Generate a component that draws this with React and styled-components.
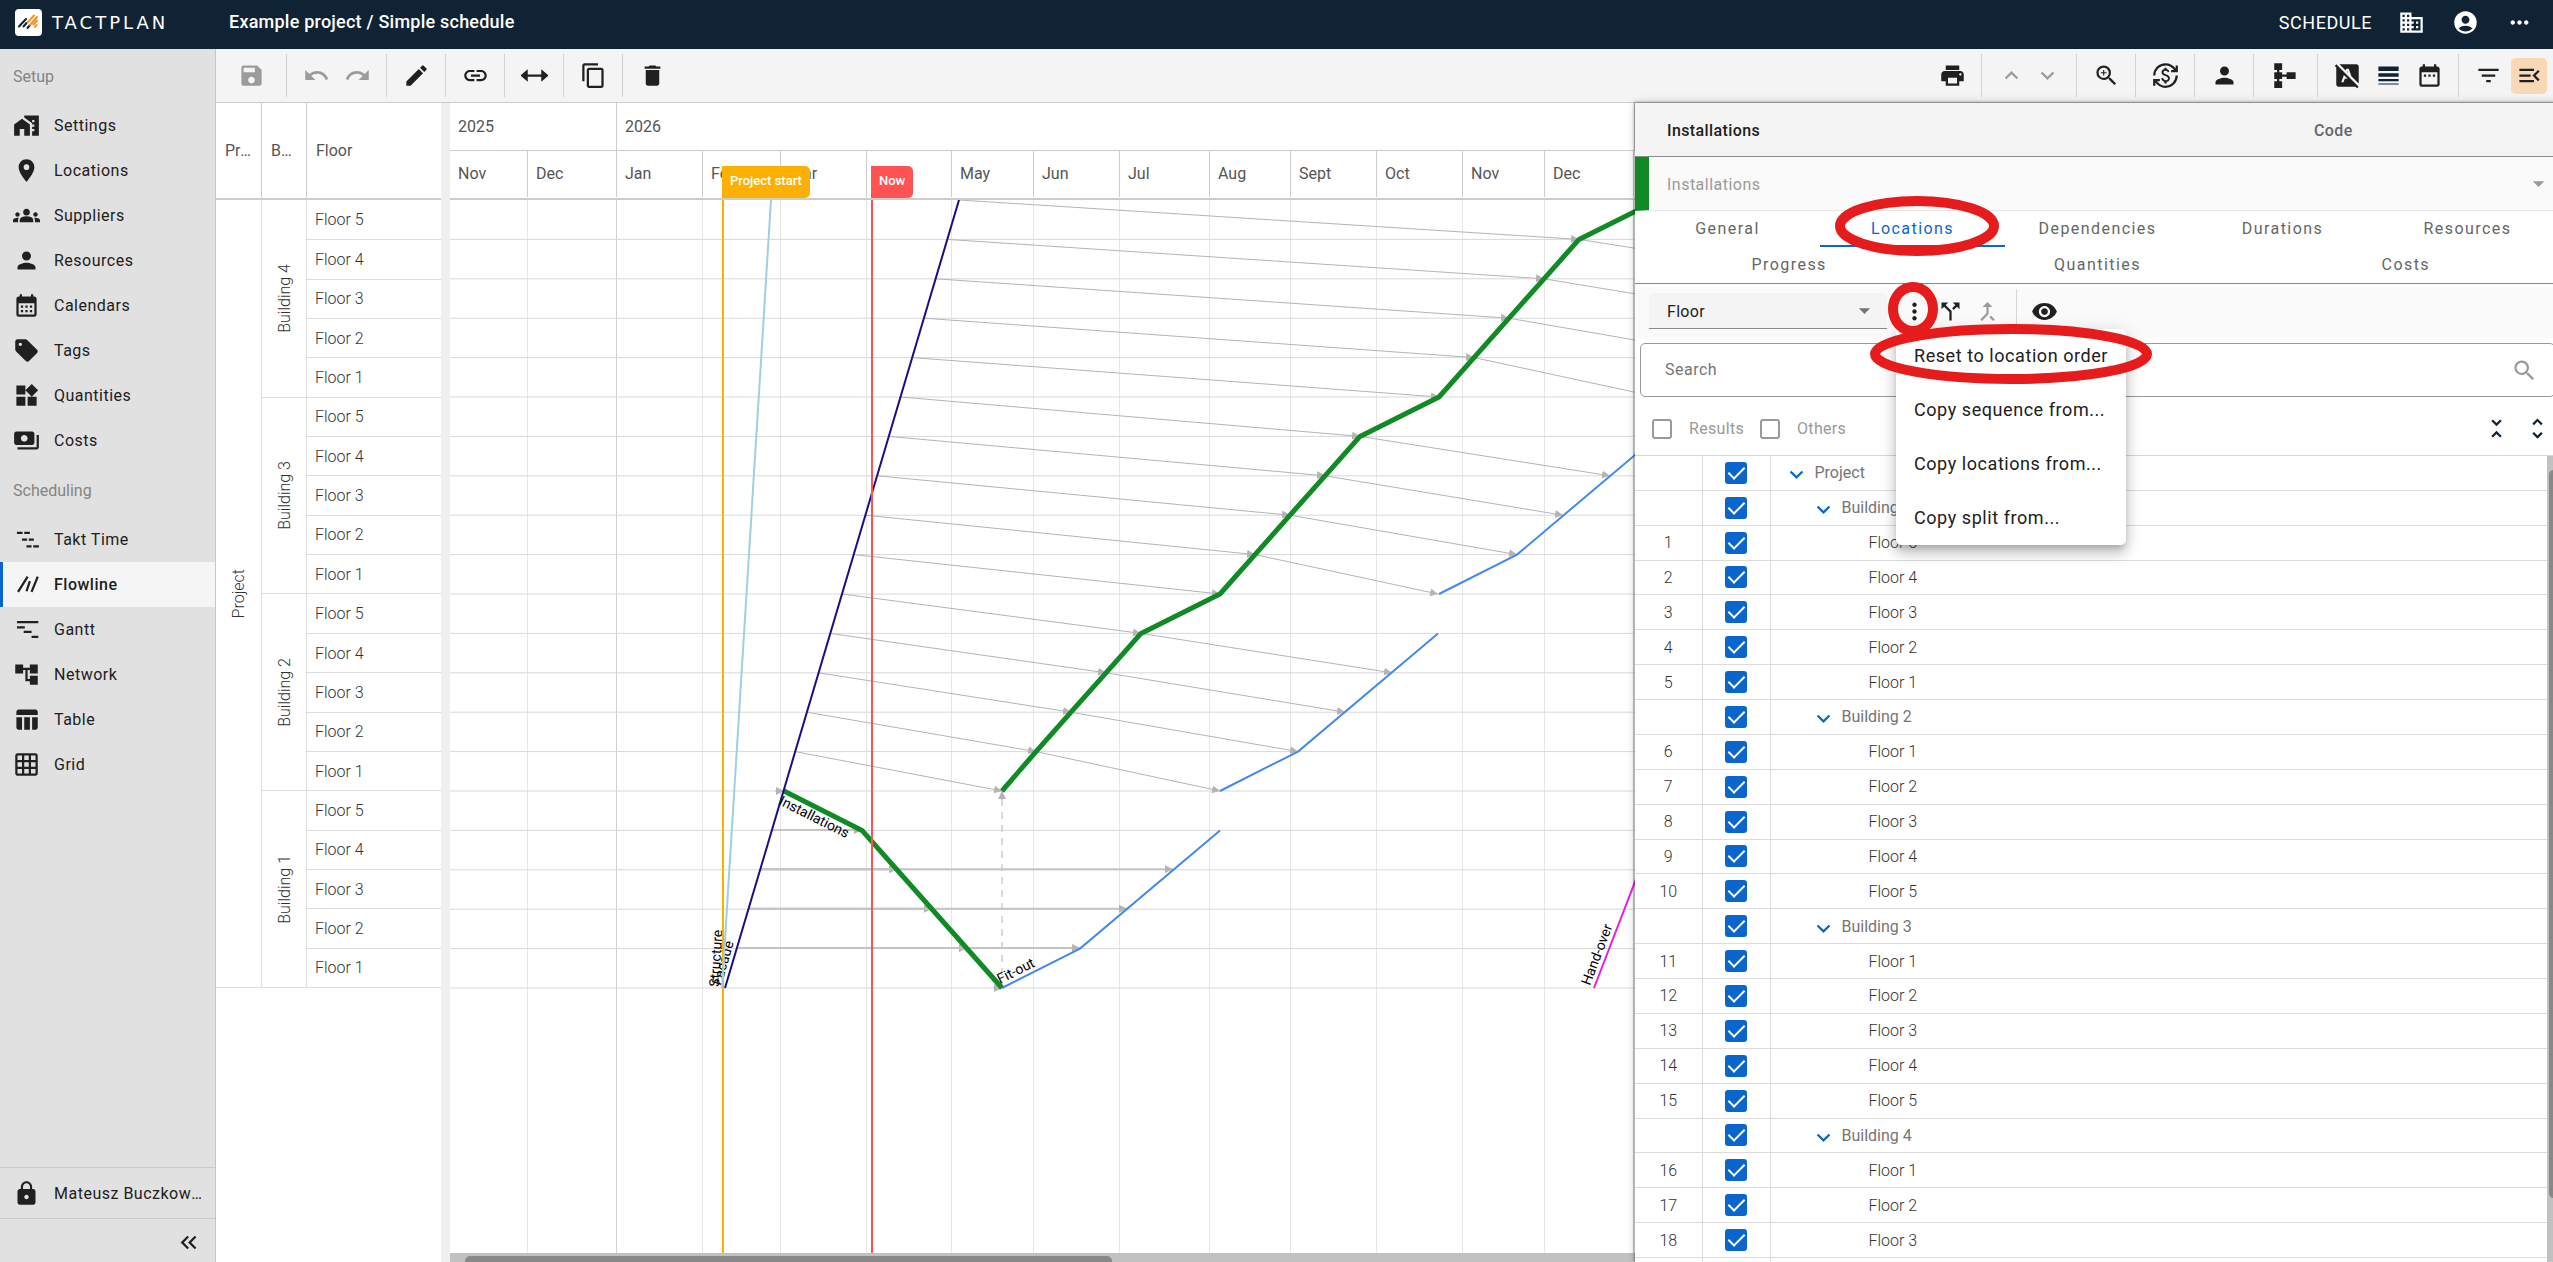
import React from 'react'
import styled, { createGlobalStyle, css } from 'styled-components';
import {
    MdHomeWork, MdPlace, MdGroups, MdPerson, MdCalendarMonth, MdSell, MdWidgets, MdPayments,
    MdAccountTree, MdTableChart, MdGridOn, MdLock, MdKeyboardDoubleArrowLeft, MdSave, MdUndo,
    MdRedo, MdEdit, MdLink, MdContentCopy, MdDelete, MdPrint, MdExpandLess, MdExpandMore,
    MdZoomIn, MdCurrencyExchange, MdFontDownloadOff, MdLineWeight, MdDateRange, MdFilterList,
    MdMenuOpen, MdBusiness, MdAccountCircle, MdMoreHoriz, MdMoreVert, MdCallSplit, MdCallMerge,
    MdVisibility, MdArrowDropDown, MdUnfoldLess, MdUnfoldMore, MdSearch,
} from 'react-icons/md';

const GlobalStyle = createGlobalStyle`
    * {
        box-sizing: border-box;
    }
    body {
        margin: 0;
        overflow: hidden;
        font-family: Roboto, "Liberation Sans", sans-serif;
        font-size: 16px;
        color: #202020;
    }
    button, input, select {
        font: inherit;
        color: inherit;
    }
`;

const Page = styled.div`
    display: flex;
    flex-direction: column;
    height: 100vh;
    overflow: hidden;
    background: #fff;
`;

/* ---------- top bar ---------- */

const TopBar = styled.header`
    display: flex;
    align-items: center;
    flex: none;
    height: 49px;
    padding: 0 16px 5px 15px;
    background: #0f2334;
    color: #fff;
`;

const Brand = styled.a`
    display: flex;
    align-items: center;
    gap: 10px;
    width: 214px;
    color: inherit;
    text-decoration: none;
`;

const Wordmark = styled.span`
    font-family: "DejaVu Sans", sans-serif;
    font-size: 18px;
    letter-spacing: 3px;
`;

const Title = styled.h1`
    flex: 1;
    margin: 0;
    padding-bottom: 1px;
    font-size: 18px;
    font-weight: 500;
    letter-spacing: 0.0125em;
`;

const TopActions = styled.nav`
    display: flex;
    align-items: center;
    gap: 18px;
`;

const TopButton = styled.button`
    display: flex;
    align-items: center;
    justify-content: center;
    min-width: 36px;
    height: 36px;
    padding: 0;
    border: 0;
    background: none;
    font-size: ${props => (props.$text ? '18px' : '27px')};
    letter-spacing: ${props => (props.$text ? '0.03em' : 'normal')};
    margin-right: ${props => (props.$text ? '3px' : '0')};
    white-space: nowrap;
`;

/* ---------- sidebar ---------- */

const Body = styled.div`
    display: flex;
    flex: 1;
    min-height: 0;
`;

const Sidebar = styled.aside`
    display: flex;
    flex-direction: column;
    flex: none;
    width: 216px;
    background: #e1e1e1;
    border-right: 1px solid #c6c6c6;
`;

const SectionTitle = styled.h2`
    display: flex;
    align-items: center;
    height: 54px;
    margin: 0;
    padding-left: 13px;
    font-size: 16px;
    font-weight: 400;
    color: #848484;
`;

const NavLink = styled.a`
    display: flex;
    align-items: center;
    gap: 14px;
    height: ${props => (props.$tall ? '50px' : '45px')};
    padding: 0 12px 0 13px;
    color: #202020;
    text-decoration: none;
    letter-spacing: 0.03125em;
    ${props => props.$active && css`
        background: #f5f5f5;
        box-shadow: inset 3px 0 0 #0a66cc;
        font-weight: 500;
    `}

    svg {
        flex: none;
        width: 27px;
        height: 27px;
    }

    span {
        overflow: hidden;
        text-overflow: ellipsis;
        white-space: nowrap;
    }
`;

const SidebarFooter = styled.div`
    margin-top: auto;
    border-top: 1px solid #cbcbcb;
`;

const Collapse = styled.button`
    display: flex;
    align-items: center;
    justify-content: flex-end;
    width: 100%;
    height: 44px;
    padding: 4px 13px 0 0;
    border: 0;
    border-top: 1px solid #cbcbcb;
    background: none;
    font-size: 27px;
`;

/* ---------- toolbar ---------- */

const Main = styled.main`
    display: flex;
    flex-direction: column;
    flex: 1;
    min-width: 0;
`;

const Toolbar = styled.div`
    display: flex;
    flex: none;
    height: 54px;
    padding: 5px 6px 5px 0;
    background: #f4f4f4;
    border-bottom: 1px solid #ccc;
`;

const Group = styled.div`
    display: flex;
    align-items: center;
    gap: ${props => (props.$tight ? '0' : '5px')};
    padding: 0 11px;
    border-left: 1px solid ${props => (props.$plain ? 'transparent' : '#d2d2d2')};

    &:first-child {
        padding: 0 17px;
        border-left: 0;
    }
    &:last-child {
        padding-right: 0;
    }
`;

const Spacer = styled.div`
    flex: 1;
`;

const ToolButton = styled.button`
    display: flex;
    align-items: center;
    justify-content: center;
    width: ${props => props.$width || 36}px;
    height: 36px;
    padding: 0;
    border: 0;
    border-radius: 5px;
    background: ${props => (props.$active ? '#f8d8b5' : 'none')};
    color: ${props => props.$color || '#202020'};
    font-size: 27px;

    &:disabled {
        color: #9b9b9b;
    }
    svg {
        width: 27px;
        height: 27px;
    }
`;

/* ---------- flowline view ---------- */

const Workspace = styled.div`
    display: flex;
    flex: 1;
    min-height: 0;
`;

const LocationGrid = styled.section`
    flex: none;
    width: 225px;
    color: #555;
`;

const LocationHead = styled.div`
    display: grid;
    grid-template-columns: 46px 45px 1fr;
    height: 97px;
    border-bottom: 2px solid #ccc;
`;

const HeadCell = styled.div`
    overflow: hidden;
    padding: 0 8px 0 9px;
    border-right: 1px solid #ccc;
    line-height: 95px;
    text-overflow: ellipsis;
    white-space: nowrap;

    &:last-child {
        border-right: 0;
    }
`;

const LocationBody = styled.div`
    display: grid;
    grid-template-columns: 46px 45px 1fr;
    grid-template-rows: repeat(20, 1fr);
    height: 788px;
    border-bottom: 1px solid #ddd;
    font-weight: 300;
    color: #333;
`;

const SpanCell = styled.div`
    display: flex;
    align-items: center;
    justify-content: center;
    grid-column: ${props => props.$col};
    grid-row: ${props => props.$start} / span ${props => props.$span};
    border-right: 1px solid #ddd;
    border-top: ${props => (props.$start > 1 ? '1px solid #ddd' : '0')};

    span {
        writing-mode: vertical-rl;
        transform: rotate(180deg);
    }
`;

const FloorCell = styled.div`
    display: flex;
    align-items: center;
    grid-column: 3;
    padding-left: 8px;
    border-top: ${props => (props.$first ? '0' : '1px solid #ddd')};
`;

const Splitter = styled.div`
    flex: none;
    width: 9px;
    background: #efefef;
`;

const ChartPane = styled.section`
    position: relative;
    display: flex;
    flex-direction: column;
    flex: 1;
    min-width: 0;
    overflow: hidden;
`;

const TimeHead = styled.div`
    flex: none;
    height: 97px;
    border-bottom: 2px solid #ccc;
    color: #555;
`;

const TimeRow = styled.div`
    display: grid;
    grid-template-columns: ${props => props.$columns};
    height: 47px;
`;

const TimeCell = styled.div`
    padding-left: 8px;
    border-right: 1px solid #ccc;
    border-bottom: ${props => (props.$year ? '1px solid #ccc' : '0')};
    line-height: 47px;
`;

const Flag = styled.div`
    position: absolute;
    top: 63px;
    left: ${props => props.$left}px;
    height: 32px;
    padding: 0 8px;
    border-radius: 0 5px 5px 0;
    background: ${props => props.$color};
    color: #fff;
    font-size: 13px;
    font-weight: 500;
    line-height: 30px;
`;

const Plot = styled.svg`
    display: block;
    flex: 1;
    width: 1185px;
    min-height: 0;
`;

const ScrollX = styled.div`
    display: flex;
    flex: none;
    height: 9px;
    padding: 3px 15px 0;
    background: #c1c1c1;

    &::after {
        content: '';
        width: 56%;
        border-radius: 5px 5px 0 0;
        background: #888;
    }
`;

/* ---------- detail panel ---------- */

/* runs a little past the right edge of the window */
const Panel = styled.section`
    position: relative;
    z-index: 1;
    display: flex;
    flex-direction: column;
    flex: none;
    width: 925px;
    margin-right: -7px;
    background: #fff;
    box-shadow: 0 0 2px 1px rgba(0, 0, 0, 0.3), 0 0 9px rgba(0, 0, 0, 0.2);
`;

const PanelHead = styled.div`
    display: grid;
    grid-template-columns: 647px 1fr;
    align-items: center;
    height: 54px;
    padding: 1px 0 0 32px;
    background: #f4f4f4;
    border-bottom: 1px solid #8c8c8c;
    font-weight: 500;
    letter-spacing: 0.025em;
`;

const Muted = styled.span`
    color: #666;
`;

const SelectBox = styled.div`
    position: relative;
    display: flex;
    align-items: center;
    width: ${props => (props.$small ? '238px' : '100%')};
    height: ${props => (props.$small ? '36px' : '54px')};
    border-left: ${props => (props.$small ? '0' : '14px solid #108a24')};
    border-bottom: 1px solid ${props => (props.$small ? '#8a8a8a' : '#e6e6e6')};
    border-radius: ${props => (props.$small ? '4px 4px 0 0' : '0')};
    background: ${props => (props.$small ? '#f4f4f4' : '#fafafa')};

    select {
        appearance: none;
        width: 100%;
        height: 100%;
        padding: 1px 18px 0;
        border: 0;
        background: none;
        letter-spacing: ${props => (props.$small ? '0.02em' : '0.03em')};
    }
    select:disabled {
        color: #999;
        opacity: 1;
    }
    svg {
        position: absolute;
        right: ${props => (props.$small ? '9px' : '8px')};
        font-size: 27px;
        color: ${props => (props.$small ? '#757575' : '#999')};
        pointer-events: none;
    }
`;

const Tabs = styled.nav`
    display: flex;
    flex-wrap: wrap;
    height: 73px;
    border-bottom: 1px solid #888;
`;

const Tab = styled.button`
    flex: 1 0 ${props => (props.$wide ? '33%' : '20%')};
    height: 36px;
    padding: 0 0 2px;
    border: 0;
    background: none;
    box-shadow: ${props => (props.$active ? 'inset 0 -2px 0 #0a66cc' : 'none')};
    color: ${props => (props.$active ? '#0a66cc' : '#666')};
    letter-spacing: 0.09em;
`;

const PanelTools = styled.div`
    display: flex;
    align-items: center;
    height: 54px;
    padding-left: 14px;
    background: #fafafa;
`;

const ToolSet = styled.div`
    display: flex;
    align-items: center;
    height: 44px;
    padding: 0 10px 0 9px;

    & + & {
        border-left: 1px solid #d6d6d6;
    }
`;

const SearchBox = styled.label`
    display: flex;
    align-items: center;
    height: 54px;
    margin: 5px;
    padding: 0 16px 0 24px;
    border: 1px solid #999;
    border-radius: 5px;
    color: #999;
    font-size: 27px;

    input {
        flex: 1;
        padding: 0 0 2px;
        border: 0;
        outline: 0;
        background: none;
        font-size: 16px;
        letter-spacing: 0.03em;
    }
    input::placeholder {
        color: #757575;
    }
`;

const Filters = styled.div`
    display: flex;
    align-items: center;
    height: 53px;
    padding: 0 2px 0 17px;
    color: #999;
    letter-spacing: 0.02em;

    label {
        display: flex;
        align-items: center;
        gap: 17px;
        width: 108px;
    }
`;

const Check = styled.input`
    appearance: none;
    display: flex;
    align-items: center;
    justify-content: center;
    flex: none;
    width: 20px;
    height: 20px;
    margin: 0;
    border: 2px solid #999;
    border-radius: 3px;

    &:checked {
        width: 22px;
        height: 22px;
        border: 0;
        background: #0a66cc;
    }
    &:checked::after {
        content: '';
        width: 7px;
        height: 14px;
        margin-bottom: 4px;
        border: solid #fff;
        border-width: 0 2px 2px 0;
        transform: rotate(45deg);
    }
`;

const TreeWrap = styled.div`
    display: flex;
    flex: 1;
    min-height: 0;
    overflow: hidden;
    border-top: 1px solid #d6d6d6;
`;

const Tree = styled.table`
    flex: 1;
    height: 872px;
    border-collapse: collapse;
    table-layout: fixed;

    td {
        padding: 0;
        border-bottom: 1px solid #dcdcdc;
    }
`;

const NumberCell = styled.td`
    width: 67px;
    border-right: 1px solid #dcdcdc;
    text-align: center;
    font-weight: 300;
    color: #333;
`;

const CheckCell = styled.td`
    width: 68px;
    border-right: 1px solid #dcdcdc;

    input {
        margin: 0 auto;
    }
`;

const NameCell = styled.td`
    font-weight: ${props => (props.$leaf ? 300 : 400)};
    color: ${props => (props.$leaf ? '#333' : '#757575')};
`;

const NameInner = styled.div`
    display: flex;
    align-items: center;
    gap: 5px;
    padding-left: ${props => 12 + props.$level * 27}px;
`;

const Twisty = styled.button`
    display: flex;
    width: 27px;
    height: 27px;
    padding: 2px 0 0;
    border: 0;
    background: none;
    color: #0a66cc;
    font-size: 27px;
    visibility: ${props => (props.$hidden ? 'hidden' : 'visible')};
`;

const ScrollY = styled.div`
    flex: none;
    width: 13px;
    padding: 14px 2px 64px;
    background: #c1c1c1;

    &::after {
        content: '';
        display: block;
        height: 100%;
        border-radius: 5px;
        background: #888;
    }
`;

const Menu = styled.div`
    position: absolute;
    top: 226px;
    left: 261px;
    width: 230px;
    border-radius: 5px;
    background: #fff;
    box-shadow: 0 5px 6px -3px rgba(0, 0, 0, 0.2), 0 9px 12px 1px rgba(0, 0, 0, 0.14), 0 3px 16px 2px rgba(0, 0, 0, 0.12);
`;

const MenuItem = styled.button`
    display: block;
    width: 100%;
    height: 54px;
    padding: 0 16px 2px 18px;
    border: 0;
    background: none;
    font-size: 18px;
    letter-spacing: 0.03125em;
    text-align: left;
    white-space: nowrap;
`;

const Marks = styled.svg`
    position: absolute;
    top: 0;
    left: 0;
    width: 100%;
    height: 300px;
    pointer-events: none;
`;

/* ---------- own icons ---------- */

const LogoMark = () => (
    <svg width="27" height="27" viewBox="0 0 27 27" aria-hidden="true">
        <rect width="27" height="27" rx="4" fill="#fff" />
        <g strokeWidth="2" strokeLinecap="round" fill="none">
            <path stroke="#0f2334" d="M4 17.5l7-7.5M8.500 17.500l3-3.500M12.500 19l2.500-3" />
            <path stroke="#f0932b" d="M13 13l6-6.500M15 16l7-8M18.500 15.500l3.500-4M20 18l1.500-2" />
        </g>
    </svg>
);

const TaktIcon = () => (
    <svg viewBox="0 0 24 24" stroke="currentColor" strokeWidth="2" fill="none">
        <path d="M3.500 6h5M10 6h5M8 12h4.500M14 12h4.500M12 18h4.500M18 18h5" />
    </svg>
);

const FlowlineIcon = () => (
    <svg viewBox="0 0 24 24" stroke="currentColor" strokeWidth="2" fill="none">
        <path d="M4.500 18.500L13 5M12 18l3-9M16.500 18.500L22 5" />
    </svg>
);

const GanttIcon = () => (
    <svg viewBox="0 0 24 24" stroke="currentColor" strokeWidth="2" fill="none">
        <path d="M3.500 5.500h19M3.500 10h7M9.500 14h7M16.500 18.500h6" />
    </svg>
);

const StretchIcon = () => (
    <svg viewBox="0 0 24 24" fill="currentColor">
        <path d="M-.5 12L6 6.500V11h12V6.500L24.500 12 18 17.500V13H6v4.500z" />
    </svg>
);

const HierarchyIcon = () => (
    <svg viewBox="0 0 24 24" fill="currentColor">
        <path d="M2 1h7v6H6.500v4H13V9h8v6h-8v-2H9v2H6.500v2H9v6H2v-6h2.500v-2H2V9h2.500V7H2zM6.500 9H9v2H6.500z" />
    </svg>
);

/* ---------- data ---------- */

const setupLinks = [
    ['Settings', MdHomeWork],
    ['Locations', MdPlace],
    ['Suppliers', MdGroups],
    ['Resources', MdPerson],
    ['Calendars', MdCalendarMonth],
    ['Tags', MdSell],
    ['Quantities', MdWidgets],
    ['Costs', MdPayments],
];

const schedulingLinks = [
    ['Takt Time', TaktIcon],
    ['Flowline', FlowlineIcon],
    ['Gantt', GanttIcon],
    ['Network', MdAccountTree],
    ['Table', MdTableChart],
    ['Grid', MdGridOn],
];

const months = [
    ['Nov', 78], ['Dec', 89], ['Jan', 86], ['Feb', 78], ['Mar', 86], ['Apr', 85], ['May', 82],
    ['Jun', 86], ['Jul', 90], ['Aug', 81], ['Sept', 86], ['Oct', 86], ['Nov', 82], ['Dec', 89],
];
const monthColumns = months.map(([, width]) => `${width}px`).join(' ');

const buildings = [4, 3, 2, 1];
const floors = [5, 4, 3, 2, 1];

const tree = [{ level: 0, name: 'Project' }];
[[1, [5, 4, 3, 2, 1]], [2, [1, 2, 3, 4, 5]], [3, [1, 2, 3, 4, 5]], [4, [1, 2, 3, 4, 5]]].forEach(([building, order]) => {
    tree.push({ level: 1, name: `Building ${building}` });
    order.forEach(floor => tree.push({ level: 2, name: `Floor ${floor}` }));
});
let counter = 0;
tree.forEach(row => {
    row.number = row.level === 2 ? ++counter : '';
});

/* ---------- chart ---------- */

const ROW = 39.4;
const y = row => row * ROW;
const structureX = row => 509 - row * 11.7;
// x of the installations line on every row boundary, top to bottom
const installX = [1208, 1129, 1094, 1059, 1024, 989, 910, 875, 840, 805, 770, 691, 656, 621, 586, 552];
// [installations row, x of fit-out one row below]
const fitOutLinks = [
    [1, 1379], [2, 1332], [3, 1286], [4, 1207], [6, 1160], [7, 1113], [8, 1067], [9, 988],
    [11, 942], [12, 895], [13, 848], [14, 770],
];
const points = list => list.map(([px, row]) => `${px},${y(row)}`).join(' ');

const Chart = () => {
    let edge = 0;
    const edges = months.map(([, width]) => (edge += width));
    return (
        <Plot>
            <defs>
                <marker id="tip" markerUnits="userSpaceOnUse" markerWidth="8" markerHeight="8" refX="8" refY="4" orient="auto">
                    <path d="M0 0l8 4-8 4z" fill="#b4b4b4" />
                </marker>
            </defs>
            {edges.map((x, i) => (
                <line key={x} x1={x - 0.5} x2={x - 0.5} y1="0" y2="100%" stroke={i === 1 || i === 13 ? '#d0d0d0' : '#e6e6e6'} />
            ))}
            {Array.from({ length: 20 }, (_, i) => (
                <line key={i} x1="0" x2="1185" y1={y(i + 1)} y2={y(i + 1)} stroke="#d8d8d8" />
            ))}
            <g stroke="#b4b4b4" fill="none">
                {installX.slice(1).map((x, i) => (
                    <line key={x} x1={structureX(i)} y1={y(i)} x2={x} y2={y(i + 1)} markerEnd="url(#tip)" />
                ))}
                {fitOutLinks.map(([row, x]) => (
                    <line key={x} x1={installX[row]} y1={y(row)} x2={x} y2={y(row + 1)} markerEnd="url(#tip)" />
                ))}
                <path d={`M325 ${y(15)}h9`} markerEnd="url(#tip)" />
                <path d={`M543 ${y(20)}h9`} markerEnd="url(#tip)" />
                <path d={`M552 ${y(20)}V${y(15) + 8}`} strokeDasharray="7 6" />
                <path d={`M552 ${y(15) + 9}v-9`} markerEnd="url(#tip)" />
            </g>
            <g stroke="#c4c4c4" strokeWidth="2">
                {[[16, 412], [17, 447], [18, 482], [19, 517], [17, 723], [18, 677], [19, 630]].map(([row, x]) => (
                    <line key={x} x1={structureX(row)} y1={y(row) - 0.5} x2={x} y2={y(row) - 0.5} markerEnd="url(#tip)" />
                ))}
            </g>
            <g fontSize="14" fill="#000">
                <text transform="translate(269 787) rotate(-86.6)">Structure</text>
                <text transform="translate(271 786) rotate(-73.4)">Facade</text>
            </g>
            <g fill="none" strokeWidth="2">
                <path stroke="#fbb003" d="M273 0V1100" />
                <polyline stroke="#9dd0e1" points={points([[272, 20], [321, 0]])} />
                <polyline stroke="#4489ee" points={points([[552, 20], [630, 19], [770, 16]])} />
                <polyline stroke="#4489ee" points={points([[770, 15], [848, 14], [988, 11]])} />
                <polyline stroke="#4489ee" points={points([[989, 10], [1067, 9], [1207, 6]])} />
                <polyline stroke="#e61ee0" points={points([[1144, 20], [1220, 15]])} />
            </g>
            <g fill="none" stroke="#108a24" strokeWidth="5" strokeLinejoin="round">
                <polyline points={points([[334, 15], [412, 16], [552, 20]])} />
                <polyline points={points(installX.map((x, i) => [x, i]))} />
            </g>
            <g fill="none" strokeWidth="2">
                <polyline stroke="#1a0f80" points={points([[275, 20], [509, 0]])} />
                <path stroke="#ff5252" d="M422 0V1100" />
            </g>
            <g fontSize="14" fill="#000">
                <text transform="translate(328 604) rotate(26.7)">Installations</text>
                <text transform="translate(550 784) rotate(-26.7)">Fit-out</text>
                <text transform="translate(1140 786) rotate(-69.200)">Hand-over</text>
            </g>
        </Plot>
    );
};

/* ---------- page parts ---------- */

const NavItem = ({ label, icon: Icon, active, tall }) => (
    <NavLink href="#" $active={active} $tall={tall}>
        <Icon />
        <span>{label}</span>
    </NavLink>
);

const Tool = ({ label, icon: Icon, ...rest }) => (
    <ToolButton type="button" aria-label={label} {...rest}>
        <Icon />
    </ToolButton>
);

const DetailPanel = () => (
    <Panel>
        <PanelHead>
            <span>Installations</span>
            <Muted>Code</Muted>
        </PanelHead>
        <SelectBox>
            <select aria-label="Task" disabled defaultValue="Installations">
                <option>Installations</option>
            </select>
            <MdArrowDropDown />
        </SelectBox>
        <Tabs>
            {['General', 'Locations', 'Dependencies', 'Durations', 'Resources'].map(name => (
                <Tab key={name} type="button" $active={name === 'Locations'}>{name}</Tab>
            ))}
            {['Progress', 'Quantities', 'Costs'].map(name => (
                <Tab key={name} type="button" $wide>{name}</Tab>
            ))}
        </Tabs>
        <PanelTools>
            <SelectBox $small>
                <select aria-label="Level" defaultValue="Floor">
                    <option>Floor</option>
                </select>
                <MdArrowDropDown />
            </SelectBox>
            <ToolSet>
                <Tool label="More" icon={MdMoreVert} $width={36} />
                <Tool label="Split" icon={MdCallSplit} $width={37} />
                <Tool label="Merge" icon={MdCallMerge} $width={37} disabled />
            </ToolSet>
            <ToolSet>
                <Tool label="Show" icon={MdVisibility} $width={37} />
            </ToolSet>
        </PanelTools>
        <SearchBox>
            <input type="text" placeholder="Search" aria-label="Search" />
            <MdSearch />
        </SearchBox>
        <Filters>
            <label><Check type="checkbox" />Results</label>
            <label><Check type="checkbox" />Others</label>
            <Spacer />
            <Tool label="Collapse all" icon={MdUnfoldLess} $width={41} $color="#0f2334" />
            <Tool label="Expand all" icon={MdUnfoldMore} $width={41} $color="#0f2334" />
        </Filters>
        <TreeWrap>
            <Tree>
                <tbody>
                    {tree.map((row, i) => (
                        <tr key={i}>
                            <NumberCell>{row.number}</NumberCell>
                            <CheckCell>
                                <Check type="checkbox" defaultChecked aria-label={row.name} />
                            </CheckCell>
                            <NameCell $leaf={row.level === 2}>
                                <NameInner $level={row.level}>
                                    <Twisty type="button" aria-label="Toggle" $hidden={row.level === 2}>
                                        <MdExpandMore />
                                    </Twisty>
                                    {row.name}
                                </NameInner>
                            </NameCell>
                        </tr>
                    ))}
                </tbody>
            </Tree>
            <ScrollY />
        </TreeWrap>
        <Menu>
            <MenuItem type="button">Reset to location order</MenuItem>
            <MenuItem type="button">Copy sequence from...</MenuItem>
            <MenuItem type="button">Copy locations from...</MenuItem>
            <MenuItem type="button">Copy split from...</MenuItem>
        </Menu>
        <Marks fill="none" stroke="#e61c1c" strokeWidth="10">
            <ellipse cx="282" cy="123" rx="77" ry="25" />
            <ellipse cx="278" cy="206" rx="20" ry="22" />
            <ellipse cx="376" cy="251" rx="136" ry="25" />
        </Marks>
    </Panel>
);

const App = () => (
    <Page>
        <GlobalStyle />
        <TopBar>
            <Brand href="#">
                <LogoMark />
                <Wordmark>TACTPLAN</Wordmark>
            </Brand>
            <Title>Example project / Simple schedule</Title>
            <TopActions>
                <TopButton type="button" $text>SCHEDULE</TopButton>
                <TopButton type="button" aria-label="Company"><MdBusiness /></TopButton>
                <TopButton type="button" aria-label="Account"><MdAccountCircle /></TopButton>
                <TopButton type="button" aria-label="More"><MdMoreHoriz /></TopButton>
            </TopActions>
        </TopBar>
        <Body>
            <Sidebar>
                <SectionTitle>Setup</SectionTitle>
                {setupLinks.map(([label, icon]) => (
                    <NavItem key={label} label={label} icon={icon} />
                ))}
                <SectionTitle>Scheduling</SectionTitle>
                {schedulingLinks.map(([label, icon]) => (
                    <NavItem key={label} label={label} icon={icon} active={label === 'Flowline'} />
                ))}
                <SidebarFooter>
                    <NavItem label="Mateusz Buczkowski" icon={MdLock} tall />
                    <Collapse type="button" aria-label="Collapse menu"><MdKeyboardDoubleArrowLeft /></Collapse>
                </SidebarFooter>
            </Sidebar>
            <Main>
                <Toolbar>
                    <Group>
                        <Tool label="Save" icon={MdSave} disabled />
                    </Group>
                    <Group>
                        <Tool label="Undo" icon={MdUndo} disabled />
                        <Tool label="Redo" icon={MdRedo} disabled />
                    </Group>
                    <Group><Tool label="Edit" icon={MdEdit} /></Group>
                    <Group><Tool label="Link" icon={MdLink} /></Group>
                    <Group><Tool label="Stretch" icon={StretchIcon} /></Group>
                    <Group><Tool label="Copy" icon={MdContentCopy} /></Group>
                    <Group><Tool label="Delete" icon={MdDelete} /></Group>
                    <Spacer />
                    <Group $plain><Tool label="Print" icon={MdPrint} /></Group>
                    <Group $tight>
                        <Tool label="Up" icon={MdExpandLess} disabled />
                        <Tool label="Down" icon={MdExpandMore} disabled />
                    </Group>
                    <Group><Tool label="Zoom" icon={MdZoomIn} /></Group>
                    <Group><Tool label="Cash flow" icon={MdCurrencyExchange} /></Group>
                    <Group><Tool label="Resources" icon={MdPerson} /></Group>
                    <Group><Tool label="Hierarchy" icon={HierarchyIcon} $width={41} /></Group>
                    <Group>
                        <Tool label="Hide names" icon={MdFontDownloadOff} />
                        <Tool label="Line weight" icon={MdLineWeight} $color="#0f2334" />
                        <Tool label="Dates" icon={MdDateRange} />
                    </Group>
                    <Group>
                        <Tool label="Filter" icon={MdFilterList} />
                        <Tool label="Details" icon={MdMenuOpen} $active />
                    </Group>
                </Toolbar>
                <Workspace>
                    <LocationGrid>
                        <LocationHead>
                            <HeadCell>Project</HeadCell>
                            <HeadCell>Building</HeadCell>
                            <HeadCell>Floor</HeadCell>
                        </LocationHead>
                        <LocationBody>
                            <SpanCell $col={1} $start={1} $span={20}><span>Project</span></SpanCell>
                            {buildings.map((building, b) => (
                                <React.Fragment key={building}>
                                    <SpanCell $col={2} $start={b * 5 + 1} $span={5}>
                                        <span>Building {building}</span>
                                    </SpanCell>
                                    {floors.map(floor => (
                                        <FloorCell key={floor} $first={b === 0 && floor === 5}>Floor {floor}</FloorCell>
                                    ))}
                                </React.Fragment>
                            ))}
                        </LocationBody>
                    </LocationGrid>
                    <Splitter />
                    <ChartPane>
                        <TimeHead>
                            <TimeRow $columns="167px 1018px">
                                <TimeCell $year>2025</TimeCell>
                                <TimeCell $year>2026</TimeCell>
                            </TimeRow>
                            <TimeRow $columns={monthColumns}>
                                {months.map(([name], i) => (
                                    <TimeCell key={i}>{name}</TimeCell>
                                ))}
                            </TimeRow>
                        </TimeHead>
                        <Flag $left={272} $color="#fbb003">Project start</Flag>
                        <Flag $left={421} $color="#ff5252">Now</Flag>
                        <Chart />
                        <ScrollX />
                    </ChartPane>
                    <DetailPanel />
                </Workspace>
            </Main>
        </Body>
    </Page>
);

export default App
